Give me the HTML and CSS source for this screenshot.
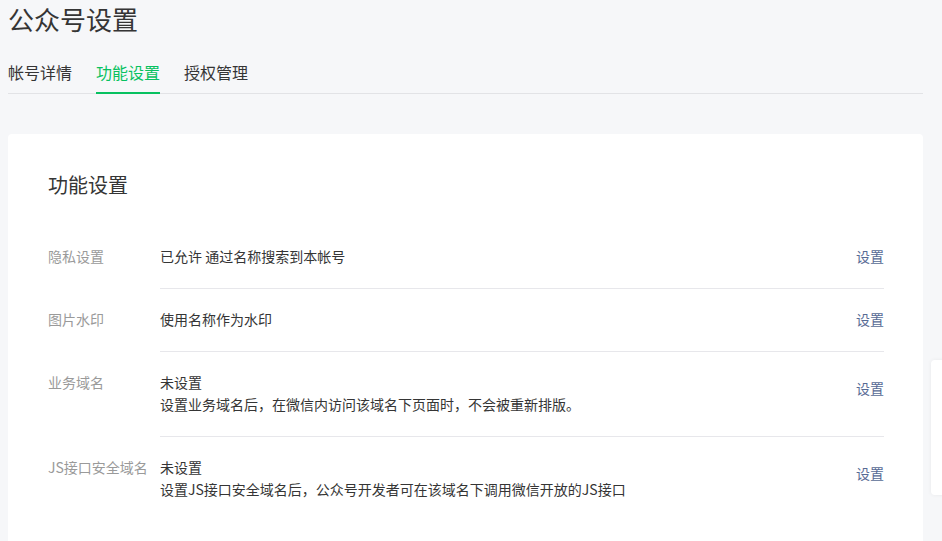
FILE: index.html
```html
<!DOCTYPE html>
<html lang="zh-CN">
<head>
  <meta charset="UTF-8" />
  <meta name="viewport" content="width=device-width, initial-scale=1" />
  <title>公众号设置</title>
  <link rel="stylesheet" href="styles.css">
</head>
<body>
  <div class="page">
    <h1 class="page-title">公众号设置</h1>

    <nav class="tabs">
      <a class="tab">帐号详情</a>
      <a class="tab tab--active">功能设置</a>
      <a class="tab">授权管理</a>
    </nav>

    <section class="card">
      <h2 class="card-title">功能设置</h2>

      <div class="row">
        <div class="row-label">隐私设置</div>
        <div class="row-body">
          <div class="row-content">已允许 通过名称搜索到本帐号</div>
          <a class="row-action">设置</a>
        </div>
      </div>

      <div class="row">
        <div class="row-label">图片水印</div>
        <div class="row-body">
          <div class="row-content">使用名称作为水印</div>
          <a class="row-action">设置</a>
        </div>
      </div>

      <div class="row row--multi">
        <div class="row-label">业务域名</div>
        <div class="row-body">
          <div class="row-content">
            <div>未设置</div>
            <div>设置业务域名后，在微信内访问该域名下页面时，不会被重新排版。</div>
          </div>
          <a class="row-action">设置</a>
        </div>
      </div>

      <div class="row row--multi">
        <div class="row-label">JS接口安全域名</div>
        <div class="row-body">
          <div class="row-content">
            <div>未设置</div>
            <div>设置JS接口安全域名后，公众号开发者可在该域名下调用微信开放的JS接口</div>
          </div>
          <a class="row-action">设置</a>
        </div>
      </div>
    </section>
  </div>

  <div class="side-panel"></div>
</body>
</html>
```

FILE: styles.css
```css
body {
  margin: 0;
  background: #f6f7f9;
  font-family: "Noto Sans CJK SC", "Noto Sans", sans-serif;
  color: #353535;
}
.page {
  padding: 0 19px 0 8px;
}
.page-title {
  margin: 0;
  font-size: 26px;
  font-weight: normal;
  line-height: 38px;
  color: #353535;
}
.tabs {
  display: flex;
  gap: 24px;
  margin-top: 22px;
  border-bottom: 1px solid #e2e3e6;
}
.tab {
  font-size: 16px;
  line-height: 24px;
  padding-bottom: 8px;
  border-bottom: 2px solid transparent;
  margin-bottom: -1px;
  color: #353535;
  cursor: pointer;
}
.tab--active {
  color: #07c160;
  border-bottom-color: #07c160;
}
.card {
  margin-top: 40px;
  background: white;
  border-radius: 4px;
  padding: 37px 39px 0 40px;
  min-height: 420px;
}
.card-title {
  margin: 0 0 27px;
  font-size: 20px;
  font-weight: normal;
  line-height: 28px;
  color: #353535;
}
.row {
  display: flex;
  font-size: 14px;
  line-height: 22px;
}
.row-label {
  width: 112px;
  flex-shrink: 0;
  padding-top: 19px;
  color: #9a9a9a;
  white-space: nowrap;
}
.row-body {
  flex: 1;
  display: flex;
  align-items: center;
  padding: 19px 0 21px;
  border-bottom: 1px solid #e7e7eb;
}
.row:last-child .row-body {
  border-bottom: none;
}
.row-content {
  flex: 1;
}
.row-action {
  color: #576b95;
  cursor: pointer;
}
.row--multi .row-action {
  margin-bottom: 10px;
}
.side-panel {
  position: fixed;
  top: 360px;
  left: 931px;
  width: 80px;
  height: 135px;
  background: white;
  border-radius: 4px;
  box-shadow: 0 0 4px rgba(0,0,0,0.06);
}
```
